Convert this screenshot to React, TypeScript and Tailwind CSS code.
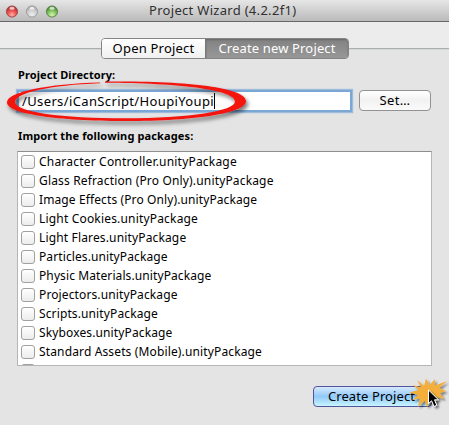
const packages = [
  { name: "Character Controller.unityPackage", spacing: "tracking-[0.2px]" },
  { name: "Glass Refraction (Pro Only).unityPackage", spacing: "tracking-[0.16px]" },
  { name: "Image Effects (Pro Only).unityPackage", spacing: "tracking-[0.11px]" },
  { name: "Light Cookies.unityPackage", spacing: "tracking-[0.18px]" },
  { name: "Light Flares.unityPackage", spacing: "tracking-[0.15px]" },
  { name: "Particles.unityPackage", spacing: "tracking-[0.1px]" },
  { name: "Physic Materials.unityPackage", spacing: "tracking-[0.1px]" },
  { name: "Projectors.unityPackage", spacing: "tracking-[0.12px]" },
  { name: "Scripts.unityPackage", spacing: "tracking-[0.12px]" },
  { name: "Skyboxes.unityPackage", spacing: "tracking-[0.13px]" },
  { name: "Standard Assets (Mobile).unityPackage", spacing: "tracking-[0.14px]" },
];

function Lights() {
  return (
    <svg width="60" height="16" viewBox="0 0 60 16" className="shrink-0">
      <defs>
        <radialGradient id="red" cx=".5" cy=".8" r=".75">
          <stop offset="0" stopColor="#ffb0a4" />
          <stop offset=".5" stopColor="#ed5353" />
          <stop offset="1" stopColor="#a72c2d" />
        </radialGradient>
        <radialGradient id="gray" cx=".5" cy=".8" r=".75">
          <stop offset="0" stopColor="#eeeeee" />
          <stop offset=".6" stopColor="#cccccc" />
          <stop offset="1" stopColor="#a2a2a2" />
        </radialGradient>
        <radialGradient id="green" cx=".5" cy=".8" r=".75">
          <stop offset="0" stopColor="#d7f5ad" />
          <stop offset=".5" stopColor="#83c563" />
          <stop offset="1" stopColor="#43822f" />
        </radialGradient>
      </defs>
      <circle cx="12" cy="8.500" r="5.600" fill="url(#red)" stroke="#963f3e" strokeWidth=".8" />
      <circle cx="32" cy="8.500" r="5.600" fill="url(#gray)" stroke="#929292" strokeWidth=".8" />
      <circle cx="52" cy="8.500" r="5.600" fill="url(#green)" stroke="#4e7b3c" strokeWidth=".8" />
      <g fill="#fff" opacity=".7">
        <ellipse cx="12" cy="5.300" rx="2.600" ry="1.500" />
        <ellipse cx="32" cy="5.300" rx="2.600" ry="1.500" />
        <ellipse cx="52" cy="5.300" rx="2.600" ry="1.500" />
      </g>
    </svg>
  );
}

function HandDrawnRing() {
  return (
    <svg width="256" height="56" viewBox="0 0 256 56" className="pointer-events-none absolute -left-[17px] -top-[14px] z-10">
      <defs>
        <filter id="ringShadow" x="-10%" y="-20%" width="120%" height="150%">
          <feDropShadow dx="2" dy="3" stdDeviation="2" floodColor="#000" floodOpacity=".55" />
        </filter>
      </defs>
      <path
        filter="url(#ringShadow)"
        fill="#f4120e"
        d="M100 6.600 C48 8 7 16 7 26.500 C7 38 59 45 125 45 C197 45 246 37 246 25 C246 12 190 4.500 105 5.500 L105 6.800 C180 7 235 14 235 25.500 C235 35 190 42.300 125 42.300 C61 42.300 15 36 15 26 C15 17 50 9 100 7.300 Z"
      />
    </svg>
  );
}

function ClickMarker() {
  return (
    <svg width="42" height="42" viewBox="0 0 42 42" className="pointer-events-none absolute -right-[17px] -top-[10px] z-10">
      <defs>
        <filter id="burstShadow" x="-20%" y="-20%" width="150%" height="150%">
          <feDropShadow dx="2" dy="2" stdDeviation="1.300" floodColor="#000" floodOpacity=".45" />
        </filter>
      </defs>
      <path
        filter="url(#burstShadow)"
        fill="#f3ae3a"
        d="M10 4 L17 10 L19 2.500 L22.500 9 L28 3 L28 9.500 L40 5 L32 12 L39 15 L33 17 L37 23 L30 21 L28 29 L24 24 L20 31 L18 24.500 L11 31 L13 22.500 L5 24 L11 19 L2 16.500 L11.500 14 L6 9 L14 11.500 Z"
      />
      <path
        filter="url(#burstShadow)"
        fill="#000"
        stroke="#fff"
        strokeWidth="1"
        d="M21.500 14 V27.500 L24.600 24.800 L27 30.500 L29.800 29.300 L27.500 23.800 H31.500 Z"
      />
    </svg>
  );
}

export default function App() {
  return (
    <main className="flex h-[425px] w-[449px] flex-col overflow-hidden bg-[#e4e4e4] font-['Noto_Sans',sans-serif] text-[12px] leading-[19px] text-black">
      <header className="flex h-[22px] shrink-0 items-center rounded-t-[4px] border-b border-[#686868] bg-linear-to-b from-[#e6e6e6] to-[#bababa]">
        <Lights />
        <h1 className="ml-[89px] whitespace-nowrap text-[13px] tracking-[0.3px] text-[#303030]">Project Wizard (4.2.2f1)</h1>
      </header>

      <nav className="flex h-[38px] shrink-0 items-start bg-linear-to-b from-[#ececec] from-[26px] to-[#e4e4e4] to-[26px]">
        <div className="mt-[26px] h-[2px] w-[101px] border-t border-[#aaaeac] bg-[#d5d7d5]" />
        <div className="mt-4 flex h-[21px] w-[248px] overflow-hidden rounded-[4px] border border-[#858585]">
          <button className="w-[103px] whitespace-nowrap bg-linear-to-b from-white to-[#f0f0f0] text-[13px] leading-[19px] tracking-[0.2px]">Open Project</button>
          <button className="flex-1 whitespace-nowrap border-l border-[#777] bg-linear-to-b from-[#828282] to-[#989898] text-[13px] leading-[19px] tracking-[0.15px] text-white shadow-[inset_0_1px_2px_#666]">Create new Project</button>
        </div>
        <div className="mt-[26px] h-[2px] flex-1 border-t border-[#aaaeac] bg-[#d5d7d5]" />
      </nav>

      <section className="flex flex-1 flex-col px-[17px] pt-[5px]">
        <h2 className="ml-px text-[11px] font-bold leading-[19px] tracking-[0.08px]">Project Directory:</h2>
        <div className="relative mt-[6px] flex h-[22px] items-start">
          <div className="flex h-[22px] w-[335px] items-center border-2 border-[#7ba7d5] bg-white pl-[3px] shadow-[0_0_1px_1px_#9dbcdc]">
            <span className="whitespace-nowrap text-[13px] tracking-[0.37px]">/Users/iCanScript/HoupiYoupi</span>
            <span className="h-[16px] w-px bg-black" />
          </div>
          <HandDrawnRing />
          <button className="ml-[7px] h-[21px] w-[72px] rounded-[4px] border border-[#929292] bg-linear-to-b from-white via-[#f2f2f2] to-[#fafafa] text-[13px] leading-[19px] tracking-[0.4px]">Set…</button>
        </div>
        <h2 className="ml-px mt-[14px] text-[11px] font-bold leading-[19px] tracking-[0.13px]">Import the following packages:</h2>
        <div className="mt-[6px] h-[215px] w-[415px] overflow-hidden border border-[#b5b5b5] border-t-[#8e8e8e] bg-white pl-[3px]">
          {packages.map(({ name, spacing }) => (
            <label key={name} className="flex h-[19px] items-center">
              <span className="mt-px h-[14px] w-[14px] shrink-0 rounded-[3px] border border-[#a0a0a0] bg-linear-to-b from-white to-[#ececec]" />
              <span className={`ml-[4px] whitespace-nowrap ${spacing}`}>{name}</span>
            </label>
          ))}
          <div className="mt-[3px] h-[14px] w-[14px] rounded-[3px] border border-[#a0a0a0]" />
        </div>
        <div className="mt-[20px] flex justify-end">
          <div className="relative">
            <button className="block h-[21px] w-[119px] rounded-[4px] border border-[#53549c] bg-linear-to-b from-[#d6e9fc] via-[#92c9f9] to-[#c8f5ff] pr-[2px] text-[13px] leading-[19px] tracking-[0.1px]">Create Project</button>
            <ClickMarker />
          </div>
        </div>
      </section>
    </main>
  );
}
